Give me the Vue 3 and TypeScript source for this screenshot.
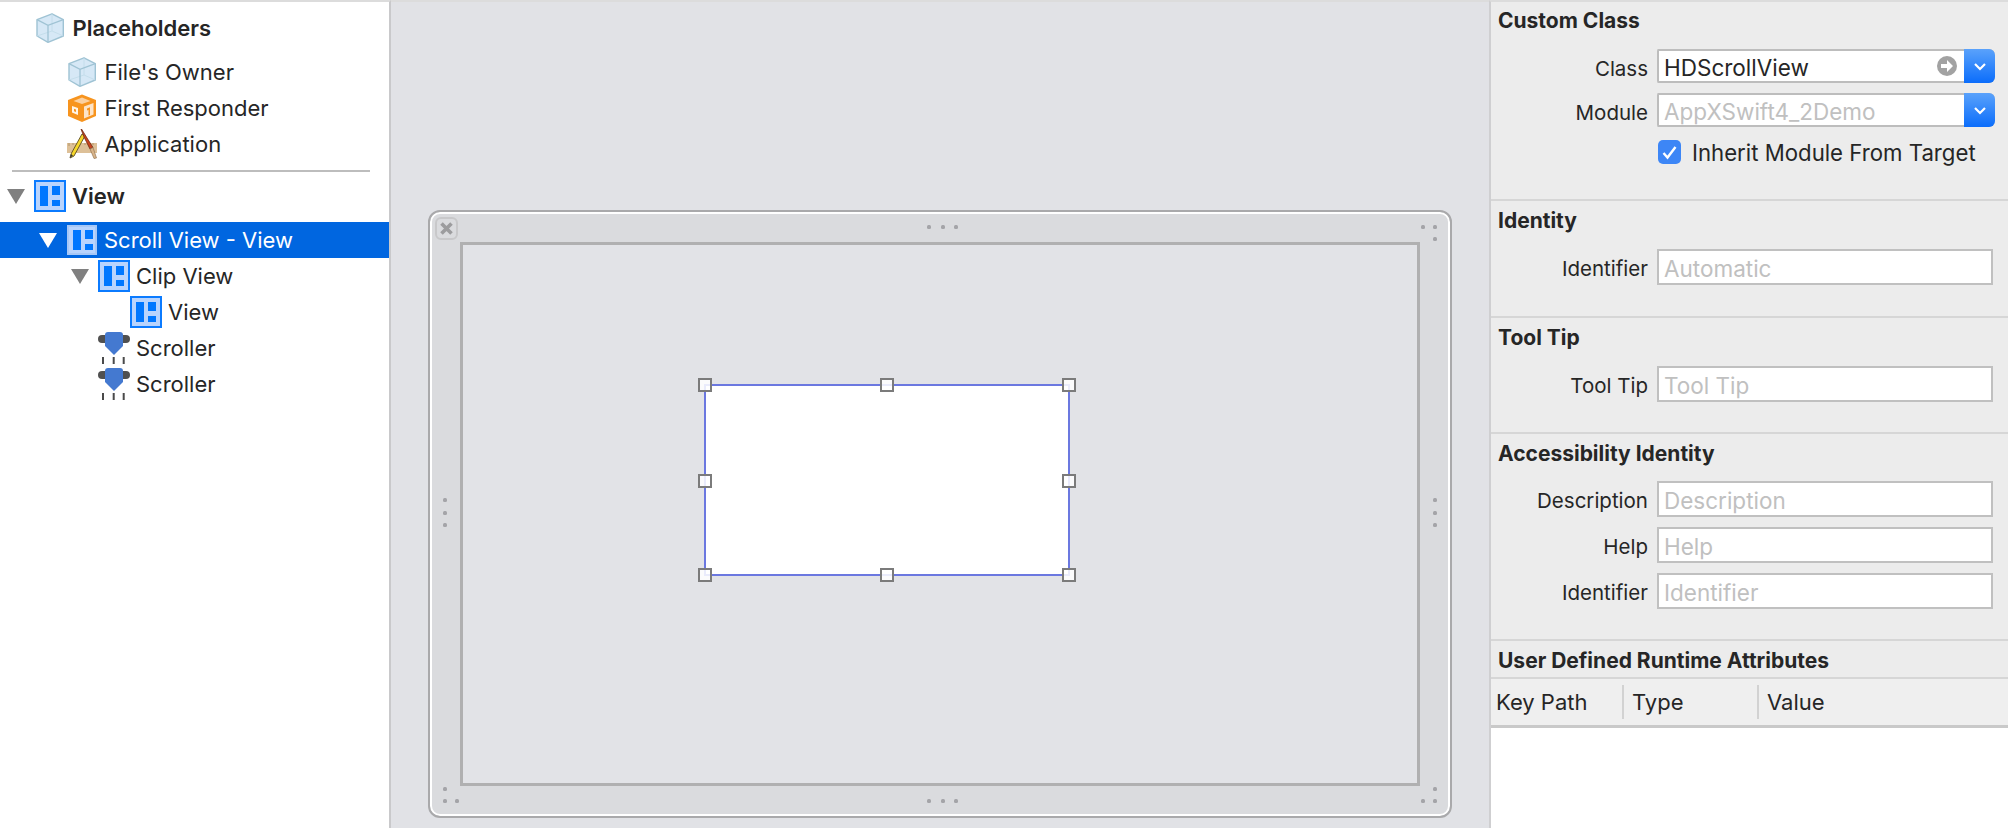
<script setup lang="ts">
interface TreeRow { label: string; icon: string; x: number; tri?: boolean; sel?: boolean; bold?: boolean }
const top: TreeRow[] = [
  { label: 'Placeholders', icon: 'cube', x: 36, bold: true },
  { label: "File's Owner", icon: 'cube', x: 68 },
  { label: 'First Responder', icon: 'resp', x: 68 },
  { label: 'Application', icon: 'appicon', x: 68 },
]
const tree: TreeRow[] = [
  { label: 'View', icon: 'view', x: 34, tri: true, bold: true },
  { label: 'Scroll View - View', icon: 'view', x: 66, tri: true, sel: true },
  { label: 'Clip View', icon: 'view', x: 98, tri: true },
  { label: 'View', icon: 'view', x: 130 },
  { label: 'Scroller', icon: 'scroller', x: 98 },
  { label: 'Scroller', icon: 'scroller', x: 98 },
]
const dots: [number, number][] = [
  [929, 227], [943, 227], [956, 227], [1423, 227], [1435, 227], [1435, 239],
  [445, 500], [445, 513], [445, 525], [1435, 500], [1435, 513], [1435, 525],
  [445, 789], [445, 801], [457, 801], [929, 801], [943, 801], [956, 801],
  [1423, 801], [1435, 801], [1435, 789],
]
const handles = ['h-tl', 'h-tc', 'h-tr', 'h-ml', 'h-mr', 'h-bl', 'h-bc', 'h-br']
const sections = [
  { title: 'Identity', cls: 's-id', fields: [{ label: 'Identifier', ph: 'Automatic' }] },
  { title: 'Tool Tip', cls: 's-tip', fields: [{ label: 'Tool Tip', ph: 'Tool Tip' }] },
  { title: 'Accessibility Identity', cls: 's-acc', fields: [
    { label: 'Description', ph: 'Description' },
    { label: 'Help', ph: 'Help' },
    { label: 'Identifier', ph: 'Identifier' },
  ] },
]
</script>

<template>
  <div class="app">
    <svg class="defs" width="0" height="0" aria-hidden="true">
      <symbol id="cube" viewBox="0 0 28 30">
        <path d="M16 .8 27.300 6.600V23L12 29.300 1 23V6.600Z" fill="#d6e8f6" stroke="#9fc3d4" stroke-width="1.400" stroke-linejoin="round"/>
        <path d="M16 18V1M16 18 1 23M16 18l11.300 5" fill="none" stroke="#c3dcea" stroke-width=".9"/>
        <path d="M1 6.600 12 12.400 27.300 6.600M12 12.400V29" fill="none" stroke="#9fc3d4" stroke-width="1.300"/>
      </symbol>
      <symbol id="resp" viewBox="0 0 28 28">
        <path d="M14 .5 28 6V22L14 28 0 22V6Z" fill="#f7941e"/>
        <path d="M14 3.500 22.500 7 14 10 5.500 7Z" fill="#fbd0a0"/>
        <path d="M16 12.500 25.500 9V20.500L16 24.500Z" fill="#fde4c8"/>
        <path d="M3 10 11.500 13V23L3 19.500Z" fill="#f7941e"/>
        <path d="M4 12 10 14V21L4 18.500Z" fill="#fff4e6"/>
        <path d="M6 14.800 8 15.500V18L6 17.300Z" fill="#f7941e"/>
        <path d="M19 14.500 22 13.300V21L20.500 21.600V16L19 16.600Z" fill="#f7941e"/>
      </symbol>
      <symbol id="appicon" viewBox="0 0 30 30">
        <rect x="0" y="14" width="30" height="10" fill="#ddc098"/>
        <path d="M2 14v3M6 14v2M10 14v3M18 14v2M22 14v3M26 14v2" stroke="#a98a60" stroke-width=".8"/>
        <path d="M3 29 4 25 15 5 18 6.800 7 27Z" fill="#f6d72a" stroke="#5a4a20" stroke-width=".9"/>
        <path d="M14 0 17 8 23 20 26 18.500 20 9 14.500 0Z" fill="#c9441f" stroke="#6e2a14" stroke-width=".8"/>
        <path d="M23 20 26 18.500 29.500 29 27 29.500Z" fill="#d8b48a" stroke="#8a6a48" stroke-width=".6"/>
        <path d="M3 29 4 25 6 26.500Z" fill="#3a3a3a"/>
      </symbol>
      <symbol id="scroller" viewBox="0 0 32 32">
        <rect x="0" y="3" width="32" height="8" rx="4" fill="#505050"/>
        <path d="M7 3Q7 0 10 0H22Q25 0 25 3V14L16 23 7 14Z" fill="#4479d0"/>
        <path d="M5 25v7M15.700 25v7M25.700 25v7" stroke="#4a4a4a" stroke-width="2"/>
      </symbol>
    </svg>

    <aside class="outline">
      <div class="group-top">
        <div v-for="r in top" :key="r.label" class="row" :class="{ bold: r.bold }">
          <span class="indent" :style="{ width: r.x + 'px' }"></span>
          <span class="icon"><svg class="ic" :class="'ic-' + r.icon"><use :href="'#' + r.icon" /></svg></span>
          <span class="lbl">{{ r.label }}</span>
        </div>
      </div>
      <div class="sep"></div>
      <div class="group-tree">
        <div v-for="(r, i) in tree" :key="i" class="row" :class="{ bold: r.bold, sel: r.sel, 'row-gap': i === 0 }">
          <span class="indent" :style="{ width: r.x + 'px' }">
            <i v-if="r.tri" class="tri"></i>
          </span>
          <span class="icon">
            <span v-if="r.icon === 'view'" class="vi"><b class="vl"></b><b class="vt"></b><b class="vb"></b></span>
            <svg v-else class="ic ic-scroller"><use href="#scroller" /></svg>
          </span>
          <span class="lbl">{{ r.label }}</span>
        </div>
      </div>
    </aside>

    <main class="canvas">
      <div class="frame">
        <svg class="grips" width="1024" height="608" viewBox="428 210 1024 608">
          <rect v-for="(d, i) in dots" :key="i" :x="d[0] - 2" :y="d[1] - 2" width="4" height="4" rx="1.500" fill="#a4a4a8" />
        </svg>
        <span class="close">
          <svg width="15" height="15" viewBox="0 0 15 15"><path d="M2.500 2.500 12.500 12.500M12.500 2.500 2.500 12.500" stroke="#9c9c9e" stroke-width="3.600"/></svg>
        </span>
        <div class="inner">
          <div class="target">
            <i v-for="h in handles" :key="h" class="handle" :class="h"></i>
          </div>
        </div>
      </div>
    </main>

    <aside class="inspector">
      <section class="sec s-class">
        <h3>Custom Class</h3>
        <div class="line l-first">
          <label>Class</label>
          <div class="combo">
            <span class="val">HDScrollView</span>
            <svg class="goto" width="20" height="20" viewBox="0 0 20 20"><circle cx="10" cy="10" r="10" fill="#a2a2a2"/><path d="M4 8h6V4l6 6-6 6v-4H4Z" fill="#fff"/></svg>
            <span class="drop"><svg width="14" height="9" viewBox="0 0 14 9"><path d="M2 2l5 5 5-5" fill="none" stroke="#fff" stroke-width="2.200"/></svg></span>
          </div>
        </div>
        <div class="line">
          <label>Module</label>
          <div class="combo">
            <span class="val ph">AppXSwift4_2Demo</span>
            <span class="drop"><svg width="14" height="9" viewBox="0 0 14 9"><path d="M2 2l5 5 5-5" fill="none" stroke="#fff" stroke-width="2.200"/></svg></span>
          </div>
        </div>
        <div class="check">
          <span class="box"><svg width="17" height="15" viewBox="0 0 17 15"><path d="M2.500 8 6.500 12.500 14.500 2" fill="none" stroke="#fff" stroke-width="2.400"/></svg></span>
          <span>Inherit Module From Target</span>
        </div>
      </section>
      <section v-for="s in sections" :key="s.title" class="sec" :class="s.cls">
        <h3>{{ s.title }}</h3>
        <div v-for="f in s.fields" :key="f.label" class="line fline">
          <label>{{ f.label }}</label>
          <div class="field"><span class="val ph">{{ f.ph }}</span></div>
        </div>
      </section>
      <section class="sec s-user">
        <h3>User Defined Runtime Attributes</h3>
      </section>
      <div class="thead">
        <span class="c1">Key Path</span>
        <span class="c2">Type</span>
        <span class="c3">Value</span>
      </div>
      <div class="tbody"></div>
    </aside>
  </div>
</template>

<style>
html, body { margin: 0; background: #e1e2e6; }
</style>

<style scoped>
.app {
  width: 2008px; height: 828px; display: flex; overflow: hidden; position: relative;
  font-family: Inter, "Liberation Sans", sans-serif; font-size: 22px; color: #262626;
}
.defs { position: absolute; }
.outline {
  width: 391px; height: 828px; box-sizing: border-box; background: #fff;
  border-top: 2px solid #dcdcdc; border-right: 2px solid #c9c9cb; flex: none;
}
.group-top { padding-top: 8px; }
.group-top .row:first-child { margin-bottom: 8px; }
.row { height: 36px; display: flex; align-items: center; }
.indent { flex: none; position: relative; height: 100%; display: block; }
.icon { flex: none; width: 38px; display: flex; align-items: center; }
.group-top .icon { width: 36.500px; }
.lbl { white-space: nowrap; line-height: 36px; }
.bold .lbl { font-weight: 600; }
.ic { display: block; width: 28px; height: 30px; }
.ic-resp { height: 28px; }
.ic-appicon { width: 30px; height: 30px; margin-left: -1px; }
.ic-scroller { width: 32px; height: 32px; }
.sep { height: 2px; margin: 8px 0 0 12px; width: 358px; background: #bdbdbd; }
.group-tree { padding-top: 6px; }
.row-gap { margin-bottom: 8px; }
.sel { background: #0066e0; color: #fff; }
.tri {
  position: absolute; right: 9px; top: 11px; width: 0; height: 0;
  border-left: 9px solid transparent; border-right: 9px solid transparent; border-top: 15px solid #808080;
}
.sel .tri { border-top-color: #fff; }
.vi {
  width: 32px; height: 32px; box-sizing: border-box; border: 2px solid #0b7bff; background: #b9d4fd;
  position: relative; display: block;
}
.sel .vi { border-color: #a8c8f6; width: 30px; height: 30px; margin-left: 1px; }
.vi b { position: absolute; background: #0077ff; display: block; }
.vl { left: 4px; top: 4px; width: 8px; height: 20px; }
.vt { left: 16px; top: 4px; width: 8px; height: 9px; }
.vb { left: 16px; top: 18px; width: 8px; height: 6px; }
.sel .vl { left: 4px; top: 3px; }
.sel .vt { left: 16px; top: 3px; }
.sel .vb { left: 16px; top: 17px; }

.canvas { width: 1098px; flex: none; box-sizing: border-box; padding: 208px 0 0 37px; background: #e1e2e6; border-top: 2px solid #dcdcdc; }
.frame {
  width: 1024px; height: 608px; box-sizing: border-box; position: relative;
  border: 2px solid #a9a9ab; border-radius: 12px; background: #dadbde;
  box-shadow: inset 0 0 0 2px #fff; padding: 30px 0 0 30px;
}
.grips { position: absolute; left: -2px; top: -2px; }
.close {
  position: absolute; left: 5px; top: 5px; width: 23px; height: 23px; box-sizing: border-box;
  border: 2px solid #c8c8ca; border-radius: 6px; display: flex; align-items: center; justify-content: center;
}
.inner {
  width: 960px; height: 544px; box-sizing: border-box; border: 3px solid #b0b0b1; background: #e2e3e7; position: relative;
}
.target {
  position: absolute; left: 241px; top: 139px; width: 366px; height: 192px; box-sizing: border-box;
  background: #fff; border: 2px solid #6b78e0;
}
.handle { position: absolute; width: 14px; height: 14px; box-sizing: border-box; border: 2px solid #7b7b7b; background: rgba(255,255,255,.85); }
.h-tl { left: -8px; top: -8px; }
.h-tc { left: 174px; top: -8px; }
.h-tr { right: -8px; top: -8px; }
.h-ml { left: -8px; top: 88px; }
.h-mr { right: -8px; top: 88px; }
.h-bl { left: -8px; bottom: -8px; }
.h-bc { left: 174px; bottom: -8px; }
.h-br { right: -8px; bottom: -8px; }

.inspector { flex: 1; background: #ececec; border-left: 2px solid #cfcfd1; border-top: 2px solid #dcdcdc; box-sizing: border-box; height: 828px; display: flex; flex-direction: column; }
.sec { box-sizing: border-box; border-bottom: 2px solid #d6d6d6; padding-left: 7px; flex: none; }
h3 { margin: 0; font-size: 21px; font-weight: 700; color: #262626; line-height: 24px; padding-top: 8px; }
.s-class h3 { padding-top: 7px; }
.s-class { height: 199px; }
.s-id { height: 117px; }
.s-tip { height: 116px; }
.s-acc { height: 207px; }
.s-user { height: 38px; }
.line { display: flex; align-items: center; height: 34px; margin-top: 10px; }
.l-first { margin-top: 16px; }
.line label { width: 150px; text-align: right; font-size: 20.500px; margin-right: 9px; flex: none; white-space: nowrap; }
.s-class .line label { padding-top: 5px; }
.fline label { padding-top: 2px; }
.combo { width: 338px; height: 34px; box-sizing: border-box; border: 2px solid #bdbdbd; border-right: 0; background: #fff; position: relative; display: flex; align-items: center; border-radius: 2px 6px 6px 2px; }
.val { padding: 2px 0 0 5px; font-size: 22.500px; white-space: nowrap; }
.ph { color: #c0c0c0; }
.goto { position: absolute; right: 38px; top: 5px; }
.drop {
  position: absolute; right: 0; top: -2px; bottom: -2px; width: 31px;
  background: linear-gradient(#5aa2fb, #0b6dfb); border-radius: 0 6px 6px 0;
  display: flex; align-items: center; justify-content: center;
}
.check { display: flex; align-items: center; margin: 13px 0 0 160px; height: 24px; font-size: 22.200px; }
.box { width: 23px; height: 24px; background: #3d86f6; border-radius: 5px; margin-right: 11px; display: flex; align-items: center; justify-content: center; }
.fline { height: 36px; }
.fline + .fline { margin-top: 10px; }
.s-id .fline, .s-tip .fline { margin-top: 16px; }
.s-acc .fline:first-of-type { margin-top: 15px; }
.field { width: 336px; height: 36px; box-sizing: border-box; border: 2px solid #c0c0c0; background: #fff; display: flex; align-items: center; }
.thead { height: 49px; flex: none; box-sizing: border-box; background: #efefef; border-bottom: 3px solid #c9c9c9; display: flex; align-items: center; font-size: 22px; position: relative; }
.thead span { box-sizing: border-box; height: 34px; line-height: 34px; flex: none; }
.c1 { width: 133px; padding-left: 5px; border-right: 2px solid #d2d2d2; }
.c2 { width: 135px; padding-left: 8px; border-right: 2px solid #d2d2d2; }
.c3 { padding-left: 8px; }
.tbody { flex: 1; background: #fff; }
</style>
